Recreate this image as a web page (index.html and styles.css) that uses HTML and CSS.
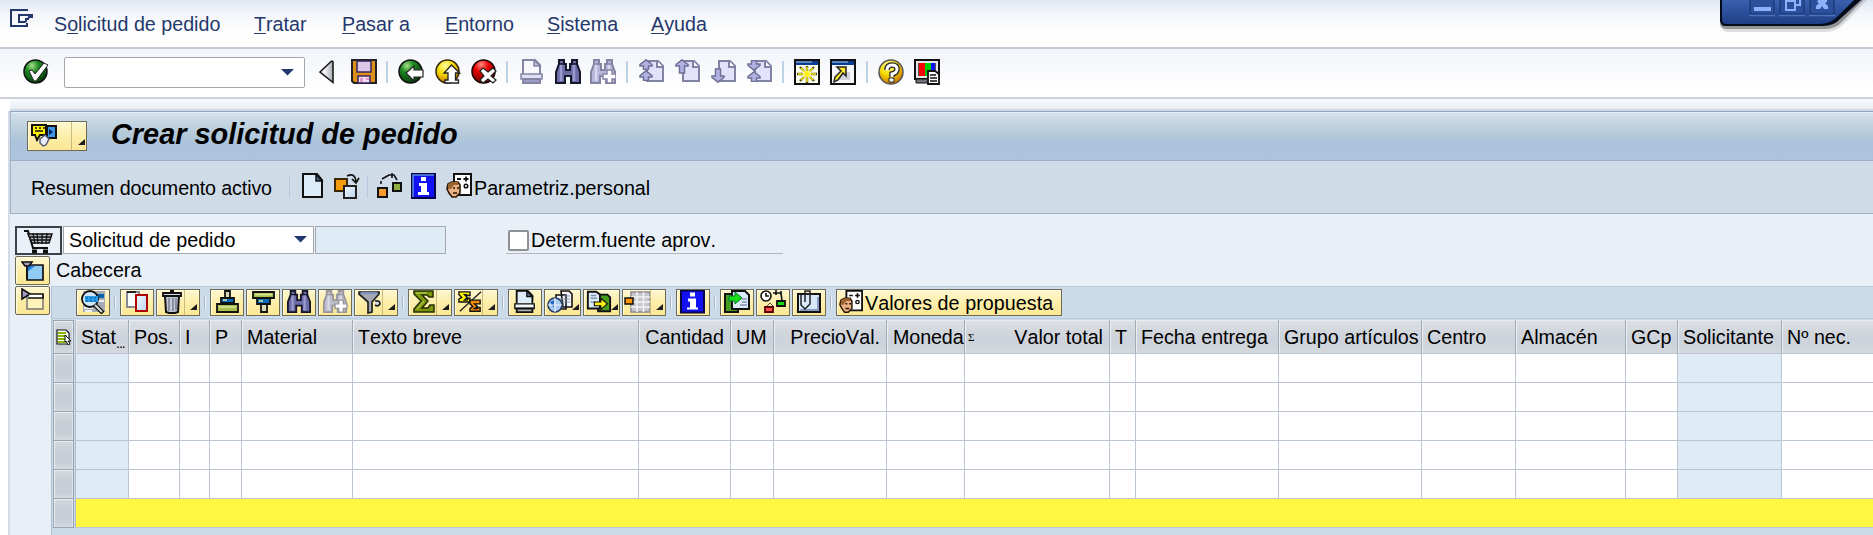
FILE: index.html
```html
<!DOCTYPE html>
<html lang="es">
<head>
<meta charset="utf-8">
<title>Crear solicitud de pedido</title>
<link rel="stylesheet" href="styles.css">
</head>
<body>
<svg class="sprite" width="0" height="0">
  <defs>
    <linearGradient id="metal" x1="0" y1="0" x2="1" y2="0"><stop offset="0" stop-color="#fff"/><stop offset=".5" stop-color="#e4e6ea"/><stop offset="1" stop-color="#a4a8b2"/></linearGradient>
    <linearGradient id="sky" x1="0" y1="0" x2="1" y2="1"><stop offset="0" stop-color="#f2f8fe"/><stop offset="1" stop-color="#b9d3ee"/></linearGradient>
    <linearGradient id="win" x1="0" y1="0" x2="0" y2="1"><stop offset="0" stop-color="#3a60ae"/><stop offset="1" stop-color="#1d3f86"/></linearGradient>
    <radialGradient id="green" cx=".35" cy=".25" r=".8"><stop offset="0" stop-color="#a8e08c"/><stop offset=".35" stop-color="#1f8a22"/><stop offset="1" stop-color="#04380a"/></radialGradient>
    <radialGradient id="amber" cx=".4" cy=".25" r=".8"><stop offset="0" stop-color="#fff9a0"/><stop offset=".45" stop-color="#f6dc00"/><stop offset="1" stop-color="#c46a00"/></radialGradient>
    <radialGradient id="red" cx=".4" cy=".2" r=".8"><stop offset="0" stop-color="#ff8a80"/><stop offset=".4" stop-color="#e80000"/><stop offset="1" stop-color="#6b0000"/></radialGradient>
  </defs>
  <symbol id="ok" viewBox="0 0 26 26"><circle cx="12.5" cy="12.5" r="11.5" fill="url(#green)" stroke="#111" stroke-width="1.5"/><path d="M6 12l3-1 3 4 9-11 4 2-12 16h-2z" fill="#fff" stroke="#222" stroke-width="1"/></symbol>
  <symbol id="back" viewBox="0 0 16 26"><path d="M1 13L12 2.500q2-1 2 1v20z" fill="url(#metal)" stroke="#111" stroke-width="1.5"/></symbol>
  <symbol id="save" viewBox="0 0 26 26"><path d="M1 1h24v23H3l-2-2z" fill="#dd8f1c" stroke="#222" stroke-width="2"/><path d="M6 2h14v11H6z" fill="#dcc8e6" stroke="#38245a" stroke-width="1.500"/><path d="M7 17h12v7H7z" fill="#efdcf2" stroke="#38245a" stroke-width="1.500"/><path d="M9 19h3v4H9zM15 19h3v2h-3z" fill="#e49ac8"/></symbol>
  <symbol id="goback" viewBox="0 0 26 26"><circle cx="12.500" cy="12.500" r="11.500" fill="url(#green)" stroke="#111" stroke-width="1.500"/><path d="M8 14l8-7v4h9v7h-9v4z" fill="#fff" stroke="#222" stroke-width="1.200"/></symbol>
  <symbol id="exit" viewBox="0 0 26 26"><circle cx="12.500" cy="12.500" r="11.500" fill="url(#amber)" stroke="#332500" stroke-width="1.500"/><path d="M16.500 6l8 8h-4v7h3v3H10v-3h3v-7H9z" fill="#fff" stroke="#222" stroke-width="1.300"/></symbol>
  <symbol id="cancel" viewBox="0 0 26 26"><circle cx="12.500" cy="12.500" r="11.500" fill="url(#red)" stroke="#1b0000" stroke-width="1.500"/><path d="M9 12l3-3 5 4 5-4 3 3-5 5 5 4-3 3-5-4-5 4-3-3 4-4z" fill="#fff" stroke="#222" stroke-width="1.200"/></symbol>
  <symbol id="print" viewBox="0 0 26 26"><path d="M4 15V1h12l5 5v9" fill="var(--paper)" stroke="var(--ink)" stroke-width="2"/><path d="M15 1v6h6z" fill="var(--fold)" stroke="var(--ink)" stroke-width="1.500"/><path d="M2 15h21v5H2z" fill="var(--tray)" stroke="var(--ink)" stroke-width="1.500"/><path d="M4 20h17v4H4z" fill="var(--base)" stroke="var(--ink)" stroke-width="2"/></symbol>
  <symbol id="find" viewBox="0 0 26 26"><path d="M4 1h5v4h2v6h4V5h2V1h5v4l3 8v11h-9v-7h-6v7H1V13l3-8z" fill="var(--body)" stroke="var(--ink)" stroke-width="2"/><path d="M6 5v17M19 5v17" stroke="var(--shine)" stroke-width="2.500"/><path d="M4 5h5M17 5h5" stroke="var(--ink)" stroke-width="1.500"/></symbol>
  <symbol id="plus" viewBox="0 0 26 26"><path d="M17 11h5v4h4v5h-4v4h-5v-4h-4v-5h4z" fill="#fff" stroke="var(--ink)" stroke-width="1.500"/></symbol>
  <symbol id="page" viewBox="0 0 26 26"><path d="M2 1h14l5 6v17H2z" fill="#dcecf8" stroke="#111" stroke-width="2"/><path d="M15 1v7h6z" fill="#426684" stroke="#111" stroke-width="1.500"/></symbol>
  <symbol id="leaf" viewBox="0 0 26 26"><path d="M8 2h11l5 5v15H8z" fill="#e2e2fa" stroke="#8282a4" stroke-width="2"/><path d="M18 2v6h6" fill="#fff" stroke="#8282a4" stroke-width="2"/></symbol>
  <symbol id="up" viewBox="0 0 14 11"><path d="M7 .8l6 4.700v1.500H9.500v3.500h-5V7H1V5.500z" fill="#b3b3e3" stroke="#6f6f95" stroke-width="1.500"/></symbol>
  <symbol id="uplong" viewBox="0 0 14 15"><path d="M7 .8l6 4.700v1.500H9.500v7h-5V7H1V5.500z" fill="#b3b3e3" stroke="#6f6f95" stroke-width="1.500"/></symbol>
  <symbol id="session" viewBox="0 0 26 26"><path d="M1 1h24v24H1z" fill="#fffff0" stroke="#111" stroke-width="2"/><path d="M2 2h22v4H2z" fill="#0a3d91"/><path d="M2 2h16v2H2z" fill="#5686bd"/><path d="M13 7v5M13 18v6M3 15h6M17 15h6M6 8l4 4M16 18l4 4M20 8l-4 4M10 18l-4 4" stroke="#4a4a18" stroke-width="2.400"/><path d="M13 8v15M4 15h18M7 9l12 12M19 9L7 21" stroke="#ffee18" stroke-width="1.500"/></symbol>
  <symbol id="shortcut" viewBox="0 0 26 26"><path d="M1 1h24v24H1z" fill="#f6f6fb" stroke="#111" stroke-width="2"/><path d="M2 2h22v4H2z" fill="#0a3d91"/><path d="M2 2h16v2H2z" fill="#5686bd"/><path d="M14 13h6v8H9z" fill="#d0d2dc"/><path d="M7 8h9v9l-3-3-5 7-4 2 1-5 6-6z" fill="#ffe92b" stroke="#222" stroke-width="1.500"/></symbol>
  <symbol id="help" viewBox="0 0 26 26"><circle cx="13" cy="13" r="12" fill="url(#amber)" stroke="#555" stroke-width="1.500"/><path d="M9 11q0-5 5-5t5 4-5 5v3" fill="none" stroke="#222" stroke-width="5.500"/><path d="M9 11q0-5 5-5t5 4-5 5v3" fill="none" stroke="#fff" stroke-width="3"/><path d="M11 19h5v4h-5z" fill="#fff" stroke="#222"/></symbol>
  <symbol id="layout" viewBox="0 0 26 26"><path d="M1 1h24v19H1z" fill="#e4e6e9" stroke="#111" stroke-width="2"/><path d="M4 4h18v13H4z" fill="#555"/><path d="M5 4h6v13H5z" fill="#f00"/><path d="M11 4h6v13h-6z" fill="#00d000"/><path d="M17 4h4v13h-4z" fill="#11f"/><path d="M2 20h14v4H2z" fill="#6d7077" stroke="#111"/><path d="M14 12h7l4 3v10H14z" fill="#fff" stroke="#111" stroke-width="1.800"/><path d="M16 16h6M16 19h7M16 22h7" stroke="#111" stroke-width="1.500"/></symbol>
  <symbol id="other" viewBox="0 0 26 26"><path d="M1 6h12v12H1z" fill="#f79a08" stroke="#3b2600" stroke-width="2"/><path d="M10 13h12v12H10z" fill="url(#sky)" stroke="#222" stroke-width="2"/><path d="M13 3q8-4 9 6M18 6l4 4 3-5" fill="none" stroke="#111" stroke-width="1.700"/></symbol>
  <symbol id="flow" viewBox="0 0 26 26"><path d="M2 15h9v9H2z" fill="#f79a2c" stroke="#111" stroke-width="2"/><path d="M17 10h8v8h-8z" fill="#8fae42" stroke="#111" stroke-width="2"/><path d="M5 11V8M6 6l7-4M12 2h6l3 5M16 0v5" fill="none" stroke="#111" stroke-width="1.600"/></symbol>
  <symbol id="info" viewBox="0 0 26 26"><path d="M1 1h23v24H1z" fill="#1111f4" stroke="#05054c" stroke-width="2"/><path d="M2 24V2h21" fill="none" stroke="#5a8fe0" stroke-width="1.500"/><path d="M10 4h5v4h-5zM8 10h8v9h2v3H7v-3h3v-6H8z" fill="#fff"/></symbol>
  <symbol id="person" viewBox="0 0 26 26"><path d="M8 1h17v21H8z" fill="#fff" stroke="#111" stroke-width="2"/><path d="M11 6h4M20 3.500v5M17.500 6h5" stroke="#111" stroke-width="1.800"/><circle cx="20" cy="13" r="1.800" fill="none" stroke="#111" stroke-width="1.500"/><path d="M2 11l4-2h6l2 3v8l-4 4H6l-3-4-2-4z" fill="#e9b184" stroke="#2b1706" stroke-width="1.600"/><path d="M2 11l4-2h6v3H8l-3 4H2z" fill="#9b6330"/><path d="M7 15h2M11 15h2M7 20h4" stroke="#2b1706" stroke-width="1.600"/></symbol>
  <symbol id="variant" viewBox="0 0 26 24"><path d="M1 2h14v10H9l-3 5-2-5H1z" fill="#fff200" stroke="#111" stroke-width="2"/><path d="M4 5h2M8 5h2M12 5h2M4 8h8" stroke="#111" stroke-width="1.600"/><path d="M16 3h9v12h-9z" fill="#3f95e4" stroke="#111" stroke-width="2"/><path d="M18 6v6l4-3z" fill="#061f5e"/><path d="M9 16l5-4 4 4-3 6-3 1-3-3z" fill="#e6eefb" stroke="#555a70" stroke-width="1.500"/></symbol>
  <symbol id="cart" viewBox="0 0 29 24"><path d="M0 1h4l5 17h15" fill="none" stroke="#111" stroke-width="2"/><path d="M4 4h24l-3 9H8z" fill="#b8bdc4" stroke="#111" stroke-width="1.500"/><path d="M9 3l2 11M13 3l1 11M18 3v11M23 3l-1 11M5 7h22M7 10h19" stroke="#111" stroke-width="1.300"/><path d="M8 21.500h5M19 21.500h5" stroke="#111" stroke-width="4"/></symbol>
  <symbol id="open" viewBox="0 0 24 20"><path d="M6 4h16v15H6z" fill="#90cbf4" stroke="#111" stroke-width="1.700"/><path d="M6 11V5h8z" fill="#1f7de0"/><path d="M1 1h10L8 5v0H4zM6 5v13" fill="#a79bc0" stroke="#111" stroke-width="1.600"/></symbol>
  <symbol id="closed" viewBox="0 0 24 22"><path d="M6 8h16v13H6z" fill="#fdf3bb" stroke="#777" stroke-width="1.500"/><path d="M1 1l8 5-8 5z" fill="#a79bc0" stroke="#111" stroke-width="1.600"/><path d="M9 6h13v4H7" fill="#fff" stroke="#111" stroke-width="1.700"/></symbol>
  <symbol id="detail" viewBox="0 0 26 24"><path d="M3 1h22v21H3z" fill="#a5abb4"/><path d="M4 3h8M17 11h7M4 18h9M5 21h7" stroke="#eee" stroke-width="2"/><path d="M16 4h8v4h-8z" fill="#0963a8"/><circle cx="10" cy="9" r="8" fill="#cfe6f8" stroke="#111" stroke-width="1.800"/><path d="M5 6h13v6H5z" fill="#279be9"/><path d="M6 8h12M6 11h12" stroke="#075998" stroke-dasharray="2 2"/><path d="M15 15l8 8" stroke="#111" stroke-width="4.500"/><path d="M15 15l7 7" stroke="#ddd" stroke-width="2"/></symbol>
  <symbol id="copy" viewBox="0 0 26 24"><path d="M3 2h12v15H3z" fill="#fff" stroke="#889" stroke-width="2"/><path d="M3 2h9" stroke="#222" stroke-width="2"/><path d="M12 5h11v16H12z" fill="url(#sky)" stroke="#b10000" stroke-width="2"/></symbol>
  <symbol id="trash" viewBox="0 0 22 24"><path d="M4 6h14l-1 16-3 1H8l-3-1z" fill="#c3c6d4" stroke="#111" stroke-width="2"/><path d="M8 8v13M12 8v13M15 8v12" stroke="#6f7485" stroke-width="1.300"/><path d="M2 3h18v3H2zM9 1h4" fill="#d6d8e4" stroke="#111" stroke-width="1.800"/></symbol>
  <symbol id="asc" viewBox="0 0 24 24"><path d="M10 1h5v7h-5z" fill="#d9d9b8" stroke="#111" stroke-width="1.800"/><path d="M6 8h13v5H6z" fill="#0869b8" stroke="#111" stroke-width="1.800"/><path d="M2 14h21v8H2z" fill="#a9c14c" stroke="#111" stroke-width="1.800"/><path d="M8 10h4M4 17h17" stroke="#dbe8a4" stroke-width="1.500"/></symbol>
  <symbol id="desc" viewBox="0 0 24 24"><path d="M2 2h21v6H2z" fill="#a9c14c" stroke="#111" stroke-width="1.800"/><path d="M6 8h13v6H6z" fill="#0869b8" stroke="#111" stroke-width="1.800"/><path d="M10 14h6v8h-6z" fill="#d9d9b8" stroke="#111" stroke-width="1.800"/><path d="M4 4.500h17M8 11h4" stroke="#dbe8a4" stroke-width="1.500"/></symbol>
  <symbol id="info-alv" viewBox="0 0 26 23"><path d="M1 0h23v22H1z" fill="#1111f4" stroke="#05054c" stroke-width="2"/><path d="M10 2h5v4h-5zM8 8h8v9h2v2H7v-2h3v-6H8z" fill="#fff"/></symbol>
  <symbol id="filter" viewBox="0 0 24 24"><path d="M1 2h20v2l-7 8v10l-4 1V12L1 4z" fill="#a4a9b6" stroke="#222" stroke-width="1.700"/><path d="M3 3h16" stroke="#7891bf" stroke-width="2"/><path d="M17 11q5-1 5 3-2 3-5 1" fill="#d8d8df" stroke="#222" stroke-width="1.700"/></symbol>
  <symbol id="sum" viewBox="0 0 24 24"><path d="M2 1h19v6h-4L15 5h-5l6 6-6 7h6l2-3h4v7H2v-3l7-8-7-7z" fill="#7d960c" stroke="#232c00" stroke-width="1.500"/><path d="M4 3h11M5 19l7-8" stroke="#c9dc69"/></symbol>
  <symbol id="subsum" viewBox="0 0 26 24"><path d="M2 22L25 1" stroke="#222" stroke-width="1.500"/><path d="M1 1h12v4h-3L9 4H7l3 3-3 3h3l1-2h2v4H1V9l3-2-3-3z" fill="#fff200" stroke="#111" stroke-width="1.500"/><path d="M13 10h11v4h-3l-3 0 3 3-3 2h3l1-1h2v4H13v-3l3-2-3-3z" fill="#f58a05" stroke="#111" stroke-width="1.500"/></symbol>
  <symbol id="view" viewBox="0 0 26 24"><path d="M9 5h10v14H9zM14 1h8l3 3v13h-9z" fill="#f4f6fb" stroke="#111" stroke-width="1.600"/><path d="M11 9h6M17 6h6M17 9h6M17 12h6M11 12h6" stroke="#8293ad"/><circle cx="8" cy="15" r="7" fill="#a8c8ec" stroke="#223a66" stroke-width="1.600"/><path d="M3 12l4-2v8z" fill="#2567cc"/><path d="M8 8v14M1 15h14" stroke="#eaf2fc" stroke-width="1.200"/></symbol>
  <symbol id="export" viewBox="0 0 28 24"><path d="M13 4h10l3 3v15H13z" fill="#489c20" stroke="#111" stroke-width="2"/><path d="M2 1h9l4 3v15H2z" fill="#dcebf8" stroke="#111" stroke-width="2"/><path d="M5 5h6M5 8h7M5 12h5" stroke="#8295b0" stroke-width="1.500"/><path d="M9 12h7V8l7 6-7 6v-4H9z" fill="#ffef18" stroke="#111" stroke-width="1.200"/></symbol>
  <symbol id="grid" viewBox="0 0 27 24"><path d="M7 2h19v20H7z" fill="#c6c7cd" stroke="#8a8b95" stroke-width="1.500"/><path d="M7 7h19M7 12h19M7 17h19M13 2v20M19.500 2v20" stroke="#f3f3f5" stroke-width="1.500"/><path d="M1 8h8v6H1z" fill="#ff9200" stroke="#111" stroke-width="1.500"/></symbol>
  <symbol id="import" viewBox="0 0 26 24"><path d="M1 4h13v18H1z" fill="#489c20" stroke="#111" stroke-width="2"/><path d="M8 1h13l4 4v14H8z" fill="#dcebf8" stroke="#111" stroke-width="2"/><path d="M18 9h5M18 12h5M16 15h7" stroke="#8295b0" stroke-width="1.500"/><path d="M5 6h6V2l7 6-7 6v-3H5z" fill="#17e017" stroke="#073" stroke-width="1"/></symbol>
  <symbol id="timeflow" viewBox="0 0 26 24"><circle cx="6" cy="6" r="5" fill="#fff" stroke="#111" stroke-width="1.600"/><path d="M6 3v3h3M13 3h8l1 8M16 0v5M21 1v4" fill="none" stroke="#111" stroke-width="1.600"/><path d="M17 11h8v5h-8z" fill="#19dc19" stroke="#111" stroke-width="1.800"/><path d="M6 17l4-4 4 4" fill="none" stroke="#555"/><path d="M5 17h8v5H5z" fill="#ff5050" stroke="#5a0000" stroke-width="1.800"/></symbol>
  <symbol id="clip" viewBox="0 0 26 24"><path d="M2 4h22v18H2z" fill="#d8eafa" stroke="#111" stroke-width="2"/><path d="M22 7v13H4" fill="none" stroke="#8a9bc6" stroke-width="2"/><path d="M5 4v11l4 4 5-5V1H9v11M9 1v3h9" fill="none" stroke="#222" stroke-width="1.500"/></symbol>
  <symbol id="select" viewBox="0 0 16 16"><path d="M1 1h9l3 3v11H1z" fill="#fff" stroke="#111" stroke-width="1.200"/><path d="M2 4h8M2 7h9M2 10h8M2 13h8" stroke="#86b400" stroke-width="2"/><path d="M9 6l6 6h-3l2 3-2 1-2-4-1 1z" fill="#fff" stroke="#111"/></symbol>
  <symbol id="corner" viewBox="0 0 7 7"><path d="M7 0v6H0z" fill="#1d1d1d"/></symbol>
  <symbol id="drop" viewBox="0 0 13 7"><path d="M0 0h13L6.500 6.500z" fill="#203a70"/></symbol>
</svg>

<header class="menubar">
  <svg class="menu-mark" viewBox="0 0 24 18"><path d="M18 1H1v16h16v-3M23 6H9v7h6l1-1v-2h2l1-2h4" fill="none" stroke="#24386b" stroke-width="2"/></svg>
  <nav class="menu">
    <span>S<u>o</u>licitud de pedido</span><span><u>T</u>ratar</span><span><u>P</u>asar a</span><span><u>E</u>ntorno</span><span><u>S</u>istema</span><span><u>A</u>yuda</span>
  </nav>
</header>
<svg class="window-controls" viewBox="0 0 153 36">
  <path d="M1 0v24q1 7 6 8h98q12 0 20-9L147 0" fill="#000" opacity=".12"/>
  <path d="M0 0v25q1 4 7 4h98q11 0 18-8L143 0" fill="#000" opacity=".32"/>
  <path d="M0 0v21q1 5 5 5h98q11 0 17-7L141 0z" fill="#050b1b"/>
  <path d="M2 0v19q0 5 4 5h94q10 0 17-7L134 0z" fill="url(#win)"/>
  <path d="M30 0v14h24V0M60 0v14h24V0M90 0v14h24V0" fill="#2c509c" stroke="#17336f"/>
  <path d="M29 15.500h26M59 15.500h26M89 15.500h26" stroke="#4c70ba" stroke-width="1.500"/>
  <path d="M34 7h17v4H34z" fill="#8db2fb"/>
  <path d="M66 1h9v9h-9zM75 5h5V0" fill="none" stroke="#8db2fb" stroke-width="2"/>
  <path d="M98 0h9v2l-2 1 3 3v3h-4l-2-3-2 3h-4V6l3-3-2-1z" fill="#8db2fb"/>
</svg>

<div class="toolbar">
  <svg class="ic"><use href="#ok"/></svg>
  <div class="command"><svg><use href="#drop"/></svg></div>
  <svg class="ic slim"><use href="#back"/></svg>
  <svg class="ic"><use href="#save"/></svg>
  <i></i>
  <svg class="ic"><use href="#goback"/></svg>
  <svg class="ic"><use href="#exit"/></svg>
  <svg class="ic"><use href="#cancel"/></svg>
  <i></i>
  <svg class="ic dim"><use href="#print"/></svg>
  <svg class="ic find"><use href="#find"/></svg>
  <svg class="ic dim"><use href="#find"/><use href="#plus"/></svg>
  <i></i>
  <svg class="ic"><use href="#leaf"/><use href="#up" width="14" height="11"/><use href="#up" y="11" width="14" height="11"/></svg>
  <svg class="ic"><use href="#leaf"/><use href="#uplong" width="14" height="15"/></svg>
  <svg class="ic"><use href="#leaf"/><use href="#uplong" width="14" height="15" transform="matrix(1 0 0 -1 0 24)"/></svg>
  <svg class="ic"><use href="#leaf"/><use href="#up" width="14" height="11" transform="matrix(1 0 0 -1 0 12)"/><use href="#up" y="12" width="14" height="11"/></svg>
  <i></i>
  <svg class="ic"><use href="#session"/></svg>
  <svg class="ic"><use href="#shortcut"/></svg>
  <i></i>
  <svg class="ic"><use href="#help"/></svg>
  <svg class="ic"><use href="#layout"/></svg>
</div>
<div class="spacer"></div>

<main class="frame">
  <div class="title">
    <button class="variant"><svg class="glyph"><use href="#variant"/></svg><span class="split"><svg class="corner"><use href="#corner"/></svg></span></button>
    <h1>Crear solicitud de pedido</h1>
  </div>
  <div class="actions">
    <span class="overview">Resumen documento activo</span>
    <i></i>
    <svg class="ic"><use href="#page"/></svg>
    <svg class="ic"><use href="#other"/></svg>
    <i></i>
    <svg class="ic"><use href="#flow"/></svg>
    <svg class="ic"><use href="#info"/></svg>
    <svg class="ic"><use href="#person"/></svg>
    <span class="personal">Parametriz.personal</span>
  </div>
  <section class="body">
    <div class="docline">
      <div class="cart"><svg><use href="#cart"/></svg></div>
      <div class="select"><span>Solicitud de pedido</span><svg><use href="#drop"/></svg></div>
      <div class="number"></div>
      <label class="check"><span class="box"></span><span>Determ.fuente aprov.</span></label>
    </div>
    <div class="headline"><button class="side"><svg><use href="#open"/></svg></button><span>Cabecera</span></div>
    <div class="items">
      <button class="side low"><svg><use href="#closed"/></svg></button>
      <div class="alv">
        <div class="alv-bar">
          <button><svg><use href="#detail"/></svg></button><i></i>
          <button><svg><use href="#copy"/></svg></button>
          <button class="wide"><svg><use href="#trash"/></svg><span class="split"><svg class="corner"><use href="#corner"/></svg></span></button><i></i>
          <button><svg><use href="#asc"/></svg></button>
          <button><svg><use href="#desc"/></svg></button>
          <button><svg class="find"><use href="#find"/></svg></button>
          <button><svg class="faded"><use href="#find"/><use href="#plus"/></svg></button>
          <button class="wide"><svg><use href="#filter"/></svg><span class="split"><svg class="corner"><use href="#corner"/></svg></span></button><i></i>
          <button class="wide"><svg><use href="#sum"/></svg><span class="split"><svg class="corner"><use href="#corner"/></svg></span></button>
          <button class="wide"><svg><use href="#subsum"/></svg><span class="split"><svg class="corner"><use href="#corner"/></svg></span></button><i></i>
          <button><svg class="dark"><use href="#print"/></svg></button>
          <button class="mid"><svg><use href="#view"/></svg><svg class="corner"><use href="#corner"/></svg></button>
          <button class="mid"><svg><use href="#export"/></svg><svg class="corner"><use href="#corner"/></svg></button>
          <button class="wide"><svg class="g27"><use href="#grid"/></svg><span class="split"><svg class="corner"><use href="#corner"/></svg></span></button><i></i>
          <button><svg><use href="#info-alv"/></svg></button><i></i>
          <button><svg><use href="#import"/></svg></button>
          <button><svg><use href="#timeflow"/></svg></button>
          <button><svg><use href="#clip"/></svg></button><i></i>
          <button class="values"><svg><use href="#person"/></svg><span>Valores de propuesta</span></button>
        </div>
        <div class="table">
          <div class="selectors">
            <div class="selhead"><svg><use href="#select"/></svg></div>
            <b></b><b></b><b></b><b></b><b></b><b></b>
          </div>
          <div class="grid">
            <div class="row head">
              <span class="stat">Stat</span><span>Pos.</span><span>I</span><span>P</span><span>Material</span><span>Texto breve</span><span class="num">Cantidad</span><span>UM</span><span class="num">PrecioVal.</span><span class="cur">Moneda</span><span class="num total"><small>Σ</small>Valor total</span><span>T</span><span>Fecha entrega</span><span>Grupo artículos</span><span>Centro</span><span>Almacén</span><span>GCp</span><span>Solicitante</span><span>Nº nec.</span>
            </div>
            <div class="row"><p class="ro"></p><p></p><p></p><p></p><p></p><p></p><p></p><p></p><p></p><p></p><p></p><p></p><p></p><p></p><p></p><p></p><p></p><p class="ro"></p><p></p></div>
            <div class="row"><p class="ro"></p><p></p><p></p><p></p><p></p><p></p><p></p><p></p><p></p><p></p><p></p><p></p><p></p><p></p><p></p><p></p><p></p><p class="ro"></p><p></p></div>
            <div class="row"><p class="ro"></p><p></p><p></p><p></p><p></p><p></p><p></p><p></p><p></p><p></p><p></p><p></p><p></p><p></p><p></p><p></p><p></p><p class="ro"></p><p></p></div>
            <div class="row"><p class="ro"></p><p></p><p></p><p></p><p></p><p></p><p></p><p></p><p></p><p></p><p></p><p></p><p></p><p></p><p></p><p></p><p></p><p class="ro"></p><p></p></div>
            <div class="row"><p class="ro"></p><p></p><p></p><p></p><p></p><p></p><p></p><p></p><p></p><p></p><p></p><p></p><p></p><p></p><p></p><p></p><p></p><p class="ro"></p><p></p></div>
            <div class="sumrow"></div>
          </div>
        </div>
      </div>
    </div>
  </section>
</main>
</body>
</html>
```

FILE: styles.css
```css
* { box-sizing: border-box; }
body {
  margin: 0;
  width: 1873px;
  height: 535px;
  overflow: hidden;
  background: #fff;
  color: #000;
  font: 19.7px/24px "Liberation Sans", Arial, sans-serif;
  font-kerning: none;
  white-space: nowrap;
}
.sprite { display: block; position: absolute; }
svg { display: block; flex: none; }
button { font: inherit; margin: 0; padding: 0; color: inherit; }

/* menu bar */
.menubar {
  display: flex;
  height: 49px;
  background: linear-gradient(#e2e7f1, #f4f6fa 14px, #fff 36px);
  border-bottom: 2px solid #c4ccd8;
}
.menu-mark { width: 24px; height: 18px; margin: 9px 0 0 10px; }
.menu {
  display: grid;
  grid-template-columns: 200px 88px 103px 102px 104px 90px;
  margin: 12px 0 0 20px;
  color: #24386b;
}
.menu u { text-decoration-thickness: 1px; text-underline-offset: 2px; text-decoration-skip-ink: none; }
.window-controls { position: absolute; left: 1720px; top: 0; width: 153px; height: 36px; }

/* standard toolbar */
.toolbar {
  display: grid;
  grid-template-columns: 41px 255px 32px 35px 12px 37px 36px 35px 13px 36px 35px 36px 13px 36px 36px 36px 35px 12px 36px 36px 12px 36px 26px;
  height: 50px;
  padding: 8px 0 0 23px;
  background: linear-gradient(#f1f4f9, #fff 40px);
  border-bottom: 2px solid #cbd0d9;
}
.ic { width: 26px; height: 26px; margin-top: 2px; }
.slim { width: 16px; }
.toolbar > i, .actions > i { width: 2px; height: 22px; margin-top: 4px; background: #bfd3e6; }
.command {
  display: flex;
  justify-content: flex-end;
  width: 241px;
  height: 31px;
  padding: 11px 10px 0 0;
  border: 1px solid #a3a7ae;
  border-radius: 2px;
  background: #fff;
}
.command svg, .select svg { width: 13px; height: 7px; }
.dim { --ink: #8585a3; --paper: #f7f7fd; --fold: #c2c2e4; --tray: #dedef5; --base: #9d9dc8; --body: #b6b6dc; --shine: #d6d6f0; }
.find { --ink: #16162a; --body: #6c6ca6; --shine: #9a9ace; }
.dark { --ink: #111; --paper: #dcecf8; --fold: #63788c; --tray: #f4f6f8; --base: #aab0b8; }
.faded { --ink: #98989c; --body: #bdbdcc; --shine: #d6d6e6; }
.spacer { height: 12px; margin-left: 10px; background: linear-gradient(#f7f9fb, #e9eff6 10px, #d3d9e3 10px); }

/* application frame */
.frame { margin-left: 8px; border-left: 2px solid #d3d9e5; height: 424px; }
.title {
  display: flex;
  height: 50px;
  padding: 9px 0 0 16px;
  border-top: 1px solid #8ea6bf;
  border-left: 1px solid #9fb2c8;
  border-bottom: 1px solid #9cb0c6;
  background: linear-gradient(#d4e2ed, #b4c9d9 22px, #abc3dc 32px, #adc4dc);
  box-shadow: inset 0 1px #e4eef6;
}
.variant, .side, .alv-bar button {
  display: flex;
  background: linear-gradient(#fdf7d2, #fdeea9 50%, #fbe796);
  border: 1px solid #6f6b52;
  border-radius: 0;
  box-shadow: inset 1px 1px #fffbe4;
}
.variant { width: 60px; height: 30px; }
.glyph { width: 26px; height: 24px; margin: 1px 0 0 3px; }
.split { display: flex; align-items: flex-end; border-left: 1px solid #c9bb80; }
.corner { width: 7px; height: 7px; }
.variant .split { margin-left: 14px; width: 16px; padding: 0 0 4px 6px; }
h1 {
  margin: -2px 0 0 24px;
  font: italic bold 28.9px/30px "Liberation Sans", Arial, sans-serif;
}
.actions {
  display: grid;
  grid-template-columns: 258px 12px 33px 33px 9px 35px 35px 28px 180px;
  height: 53px;
  padding: 10px 0 0 20px;
  background: #cfdce8;
  border-left: 1px solid #9fb2c8;
  border-bottom: 1px solid #a2b4c5;
}
.actions > i { background: #b5cade; width: 1px; margin-top: 5px; }
.actions .ic { margin-top: 2px; }
.actions span { line-height: 34px; }
.overview { letter-spacing: -.13px; }
.body { height: 321px; background: #e8eff7; padding-top: 12px; }

/* document line */
.docline { display: flex; height: 29px; }
.cart { width: 47px; height: 29px; margin-left: 5px; border: 2px solid #3d4248; background: #e9f0f8; padding: 2px 0 0 7px; }
.cart svg { width: 29px; height: 24px; }
.select {
  display: flex;
  justify-content: space-between;
  width: 251px;
  height: 28px;
  margin-left: 1px;
  padding: 1px 6px 0 5px;
  background: #fff;
  border: 1px solid #a3a7ae;
}
.select svg { margin-top: 8px; }
.number { width: 131px; height: 28px; margin-left: 1px; background: #deeaf4; border: 1px solid #a3a7ae; }
.check { display: flex; width: 277px; height: 28px; margin-left: 60px; padding-left: 2px; border-bottom: 1px solid #b3b6ba; line-height: 28px; }
.box { width: 21px; height: 21px; margin: 4px 2px 0 0; background: #fff; border: 2px solid #8d9095; border-radius: 2px; }

/* header line */
.headline { display: flex; height: 31px; padding-top: 1px; }
.side { width: 35px; height: 29px; margin-left: 5px; border-radius: 2px; padding: 4px 0 0 5px; }
.side svg { width: 24px; height: 20px; }
.headline span { margin: 2px 0 0 6px; }

/* item overview */
.items { display: flex; }
.low { height: 29px; padding-top: 1px; }
.low svg { height: 22px; }
.alv { width: 1822px; height: 249px; margin-left: 1px; background: #cbdbe9; border-left: 1px solid #b3c1d1; border-top: 1px solid #bac8d8; }
.alv-bar { display: flex; height: 32px; padding: 2px 0 0 24px; border-bottom: 1px solid #bcc9d9; gap: 2px; }
.alv-bar button { width: 34px; height: 27px; padding-left: 3px; overflow: hidden; flex: none; }
.alv-bar button > svg:first-child { width: 26px; height: 24px; }
.alv-bar i { flex: none; width: 2px; height: 13px; margin: 7px 2px 0 2px; background: #a6b6c8; border-right: 1px solid #eef4f9; }
.alv-bar .wide { width: 44px; }
.alv-bar .wide > svg:first-child { width: 24px; }
.alv-bar .wide > .g27:first-child { width: 27px; margin-left: -2px; margin-right: -1px; }
.alv-bar .wide .split { padding: 0 0 4px 5px; }
.alv-bar .mid { width: 37px; padding-left: 2px; }
.alv-bar .mid .corner { align-self: flex-end; margin: 0 0 4px -1px; }
.alv-bar .values { width: 226px; padding-left: 1px; line-height: 27px; }
.values span { margin-left: 1px; letter-spacing: .05px; }

.table { display: flex; padding: 1px 0 0 1px; }
.selectors { width: 21px; border: 1px solid #98a4b3; border-bottom: 0; }
.selhead, .selectors b {
  display: block;
  height: 29px;
  border-bottom: 1px solid #98a4b3;
  background: linear-gradient(#d4d9de, #c8ced6 40%, #c9cfd7 80%, #d5dadf);
  box-shadow: inset 1px 1px #eceff2, inset -1px 0 #dfe3e8;
}
.selhead { height: 33px; padding: 8px 0 0 2px; }
.selhead svg { width: 16px; height: 16px; }
.grid { width: 1798px; margin-left: 1px; border-left: 1px solid #b3bfce; }
.row {
  display: grid;
  grid-template-columns: 53px 51px 30px 32px 111px 286px 92px 43px 113px 78px 145px 26px 143px 143px 94px 110px 52px 104px 92px;
  height: 29px;
}
.row > * { margin: 0; border-right: 1px solid #bcc6d3; border-bottom: 1px solid #bcc6d3; background: #fff; }
.row > .ro { background: #deebf5; }
.row > :last-child { border-right: 0; }
.head { height: 34px; }
.head > span {
  padding: 5px 0 0 5px;
  background: linear-gradient(#dde1e5, #d2d7dd 12px, #cdd3dc 20px, #d4d8dc);
  border-right-color: #a2acb9;
  box-shadow: inset 1px 1px #eceff2;
}
.head > .num { padding: 5px 6px 0 0; text-align: right; }
.head > .cur { padding-left: 6px; letter-spacing: -.1px; }
.head > .total { display: flex; justify-content: space-between; padding-left: 3px; }
.total small { font: 11px/24px "Liberation Serif", serif; }
.head > .stat::after { content: "..."; font-size: 14px; letter-spacing: -1px; position: relative; top: 4px; }
.sumrow { height: 29px; background: #fff741; border-bottom: 1px solid #bcc6d3; }
```
